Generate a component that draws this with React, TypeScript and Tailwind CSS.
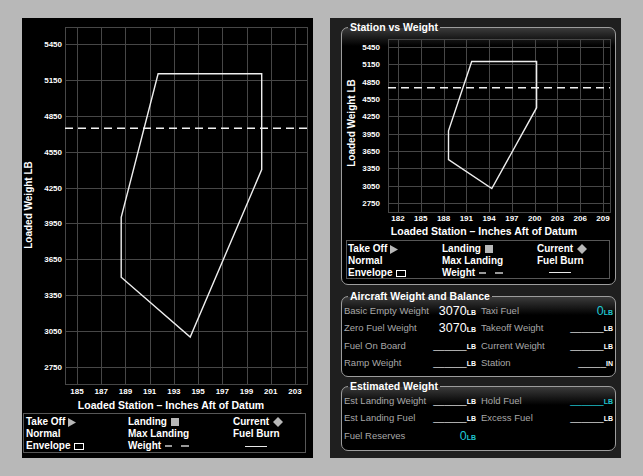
import React from 'react'

type Pt = [number, number]

// weight & balance envelope (station in, weight lb)
const envelope: Pt[] = [
  [191.7, 5200],
  [200.25, 5200],
  [200.25, 4400],
  [194.35, 3000],
  [188.65, 3500],
  [188.65, 4000],
]
const maxLanding = 4745
const weightTicks = [2750, 3050, 3350, 3650, 3950, 4250, 4550, 4850, 5150, 5450]

type ChartCfg = {
  w: number
  h: number
  plot: [number, number, number, number]
  xRef: number
  xAt: number
  xPer: number
  yAt: number
  yPer: number
  xTicks: number[]
  yLabelX: number
  xLabelY: number
  titleX: number
  titleY: number
  yTitle: [number, number]
}

function Chart({ c }: { c: ChartCfg }) {
  const sx = (s: number) => c.xAt + (s - c.xRef) * c.xPer
  const sy = (w: number) => c.yAt - ((w - 2750) / 300) * c.yPer
  const [x1, y1, x2, y2] = c.plot
  const pts = envelope.map(([s, w]) => `${sx(s).toFixed(1)},${sy(w).toFixed(1)}`).join(' ')
  return (
    <svg width={c.w} height={c.h} className="block" fontFamily="'Liberation Sans', Arial, sans-serif">
      <g stroke="#474747" strokeWidth={1}>
        {c.xTicks.map((t) => (
          <line key={'v' + t} x1={Math.round(sx(t)) + 0.5} x2={Math.round(sx(t)) + 0.5} y1={y1} y2={y2} />
        ))}
        {weightTicks.map((t) => (
          <line key={'h' + t} x1={x1} x2={x2} y1={Math.round(sy(t)) + 0.5} y2={Math.round(sy(t)) + 0.5} />
        ))}
        <rect x={x1 + 0.5} y={y1 + 0.5} width={x2 - x1} height={y2 - y1} fill="none" />
      </g>
      <line x1={x1} x2={x2} y1={sy(maxLanding)} y2={sy(maxLanding)} stroke="#f2f2f2" strokeWidth={1.5} strokeDasharray="8 5" />
      <polygon points={pts} fill="none" stroke="#eeeeee" strokeWidth={1.4} />
      <g fill="#ffffff" fontSize={8} fontWeight={700}>
        {weightTicks.map((t) => (
          <text key={'yl' + t} x={c.yLabelX} y={sy(t) + 3} textAnchor="end">
            {t}
          </text>
        ))}
        {c.xTicks.map((t) => (
          <text key={'xl' + t} x={sx(t)} y={c.xLabelY} textAnchor="middle">
            {t}
          </text>
        ))}
      </g>
      <text x={c.titleX} y={c.titleY} textAnchor="middle" fill="#ffffff" fontSize={10.5} fontWeight={700}>
        Loaded Station – Inches Aft of Datum
      </text>
      <text
        transform={`translate(${c.yTitle[0]},${c.yTitle[1]}) rotate(-90)`}
        textAnchor="middle"
        fill="#ffffff"
        fontSize={10}
        fontWeight={700}
      >
        Loaded Weight LB
      </text>
    </svg>
  )
}

const leftChart: ChartCfg = {
  w: 291,
  h: 395,
  plot: [43, 9, 285, 366],
  xRef: 185,
  xAt: 55,
  xPer: 12.11,
  yAt: 349,
  yPer: 35.9,
  xTicks: [185, 187, 189, 191, 193, 195, 197, 199, 201, 203],
  yLabelX: 40,
  xLabelY: 376,
  titleX: 149,
  titleY: 391,
  yTitle: [10, 187],
}

const rightChart: ChartCfg = {
  w: 273,
  h: 207,
  plot: [46, 6, 268, 179],
  xRef: 182,
  xAt: 56,
  xPer: 7.593,
  yAt: 170,
  yPer: 17.33,
  xTicks: [182, 185, 188, 191, 194, 197, 200, 203, 206, 209],
  yLabelX: 38,
  xLabelY: 188,
  titleX: 142,
  titleY: 202,
  yTitle: [13, 90],
}

const Tri = () => (
  <svg width="8" height="9" className="ml-[3px] inline-block">
    <polygon points="0,0 8,4.5 0,9" fill="#b8b8b8" />
  </svg>
)
const Sq = () => (
  <svg width="8" height="8" className="ml-[4px] inline-block">
    <rect x="0" y="0" width="8" height="8" fill="#b8b8b8" />
  </svg>
)
const Diamond = () => (
  <svg width="10" height="10" className="ml-[4px] inline-block">
    <polygon points="5,0 10,5 5,10 0,5" fill="#b8b8b8" />
  </svg>
)
const Env = () => (
  <svg width="10" height="7" className="ml-[4px] inline-block">
    <rect x="0.5" y="0.5" width="9" height="6" fill="none" stroke="#ffffff" strokeWidth="1" />
  </svg>
)
const Dashes = () => (
  <svg width="26" height="6" className="ml-[4px] inline-block">
    <line x1="0" x2="7" y1="3" y2="3" stroke="#ffffff" strokeWidth="1.2" />
    <line x1="16" x2="24" y1="3" y2="3" stroke="#ffffff" strokeWidth="1.2" />
  </svg>
)

function ChartLegend({ colW, className }: { colW: [string, string]; className: string }) {
  return (
    <div className={`flex border border-[#575757] bg-black pt-[2px] text-[10px] leading-[12px] font-bold text-white ${className}`}>
      <div className={`flex flex-col ${colW[0]}`}>
        <div className="flex items-center">Take Off<Tri /></div>
        <div>Normal</div>
        <div className="flex items-center">Envelope<Env /></div>
      </div>
      <div className={`flex flex-col ${colW[1]}`}>
        <div className="flex items-center">Landing<Sq /></div>
        <div>Max Landing</div>
        <div className="flex items-center">Weight<Dashes /></div>
      </div>
      <div className="flex flex-col items-start">
        <div className="flex items-center">Current<Diamond /></div>
        <div>Fuel Burn</div>
        <div className="flex h-[12px] w-[46px] items-center justify-center">
          <div className="h-px w-[22px] bg-[#e8e8e8]" />
        </div>
      </div>
    </div>
  )
}

type Val = { num?: string; blank?: number; unit: string; cyan?: boolean }

function Value({ v }: { v: Val }) {
  const color = v.cyan ? 'text-[#1fc6d0]' : 'text-white'
  return (
    <span className={`flex items-baseline ${color}`}>
      {v.num !== undefined ? (
        <span className="text-[12.5px] leading-none">{v.num}</span>
      ) : (
        <span className={`text-[10px] leading-none ${v.cyan ? '' : 'text-[#dcdcdc]'}`}>{'_'.repeat(v.blank ?? 6)}</span>
      )}
      <span className="text-[7px] font-bold leading-none">{v.unit}</span>
    </span>
  )
}

function Cell({ label, v }: { label?: string; v?: Val }) {
  if (!label) return <div />
  return (
    <div className="flex h-[17.5px] items-center justify-between">
      <span className="text-[9.5px] text-[#a8a8a8]">{label}</span>
      {v && <Value v={v} />}
    </div>
  )
}

function Group({ title, className, children }: { title: string; className?: string; children: React.ReactNode }) {
  return (
    <fieldset
      className={`rounded-[7px] border border-[#9d9d9d] bg-[linear-gradient(to_bottom,#3a3a3a,#000000_18px)] ${className ?? ''}`}
    >
      <legend className="ml-[6px] px-[2px] text-[10.5px] leading-[12px] font-bold text-white">{title}</legend>
      {children}
    </fieldset>
  )
}

export default function App() {
  return (
    <div className="flex h-[476px] w-[643px] gap-[17px] bg-[#b8b8b8] pt-[18px] pl-[22px] font-['Liberation_Sans',Arial,sans-serif]">
      <div className="flex h-[440px] w-[291px] flex-col bg-black">
        <Chart c={leftChart} />
        <ChartLegend colW={['w-[104px] pl-[2px]', 'w-[105px]']} className="ml-px h-[40px] w-[283px]" />
      </div>

      <div className="flex h-[440px] w-[291px] flex-col bg-[#1f1f1f] pt-[3px] pr-[5px] pl-[11px]">
        <Group title="Station vs Weight" className="pb-[5px]">
          <Chart c={rightChart} />
          <ChartLegend colW={['w-[95px] pl-[1px]', 'w-[95px]']} className="ml-[4px] h-[39px] w-[264px]" />
        </Group>

        <Group title="Aircraft Weight and Balance" className="mt-[5px] pb-[4px]">
          <div className="grid grid-cols-2 gap-x-[5px] px-[2px]">
            <Cell label="Basic Empty Weight" v={{ num: '3070', unit: 'LB' }} />
            <Cell label="Taxi Fuel" v={{ num: '0', unit: 'LB', cyan: true }} />
            <Cell label="Zero Fuel Weight" v={{ num: '3070', unit: 'LB' }} />
            <Cell label="Takeoff Weight" v={{ unit: 'LB' }} />
            <Cell label="Fuel On Board" v={{ unit: 'LB' }} />
            <Cell label="Current Weight" v={{ unit: 'LB' }} />
            <Cell label="Ramp Weight" v={{ unit: 'LB' }} />
            <Cell label="Station" v={{ unit: 'IN', blank: 5 }} />
          </div>
        </Group>

        <Group title="Estimated Weight" className="mt-[3px] pb-[5px]">
          <div className="grid grid-cols-2 gap-x-[5px] px-[2px]">
            <Cell label="Est Landing Weight" v={{ unit: 'LB' }} />
            <Cell label="Hold Fuel" v={{ unit: 'LB', cyan: true }} />
            <Cell label="Est Landing Fuel" v={{ unit: 'LB' }} />
            <Cell label="Excess Fuel" v={{ unit: 'LB' }} />
            <Cell label="Fuel Reserves" v={{ num: '0', unit: 'LB', cyan: true }} />
            <Cell />
          </div>
        </Group>
      </div>
    </div>
  )
}
